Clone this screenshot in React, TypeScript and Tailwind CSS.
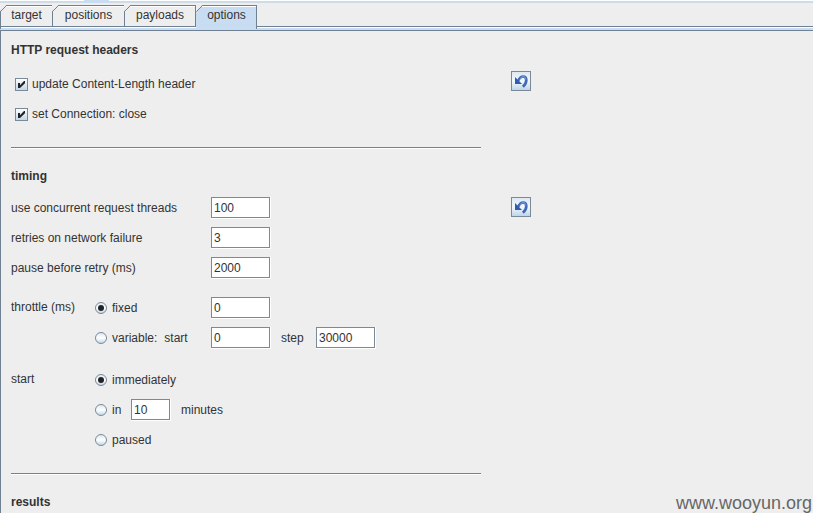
import { useState, type ReactNode } from "react";
import clsx from "clsx";

const TABS = [
  { name: "target", width: "w-[52px]" },
  { name: "positions", width: "w-[72px]" },
  { name: "payloads", width: "w-[71px]" },
  { name: "options", width: "w-[61px]" },
];

const Tab = ({
  name,
  width,
  active,
  onSelect,
}: {
  name: string;
  width: string;
  active: boolean;
  onSelect: () => void;
}) => (
  <button
    type="button"
    role="tab"
    aria-selected={active}
    onClick={onSelect}
    className={clsx(
      "relative border-t border-r border-[#6f8093] leading-4",
      width,
      active
        ? "h-6 border-l border-l-[#c8ddf2] bg-[#c8ddf2] pb-1.5 inset-shadow-[0_1px_0_#fff]"
        : "h-[22px] border-b bg-[#eee] pb-0.5 inset-shadow-[0_1px_0_#fff]"
    )}
  >
    {name}
    <svg className="absolute -top-px -left-px size-[7px]" viewBox="0 0 7 7" aria-hidden="true">
      <path d="M0 0h6.5L0 6.5z" fill="#eee" />
      <path d="M0.5 6.5l6-6" stroke="#6f8093" fill="none" />
    </svg>
  </button>
);

const ResetButton = ({ label }: { label: string }) => (
  <button
    type="button"
    aria-label={label}
    className="size-5 border border-[#7a8a99] bg-linear-to-b from-[#dde8f3] via-[#f4f8fc] to-[#bfd4e8]"
  >
    <svg className="size-[18px]" viewBox="0 0 18 18" aria-hidden="true">
      <path
        d="M6 9C7.500 6 9 4.500 11 4.500c2.300 0 3.300 1.500 3.300 3.700 0 2.600-1.200 4.600-3.400 6.600"
        fill="none"
        stroke="#4068b8"
        strokeWidth="2.700"
      />
      <path d="M8 7.500c1-2 2-3 3.200-3 1.600 0 2.600 1.200 2.600 3" fill="none" stroke="#86a6de" strokeWidth="0.900" />
      <path d="M3 5v7h7z" fill="#2f5bb0" />
    </svg>
  </button>
);

const TextBox = ({
  label,
  id,
  value,
  narrow,
}: {
  label?: string;
  id?: string;
  value: string;
  narrow?: boolean;
}) => (
  <input
    type="text"
    id={id}
    aria-label={label}
    defaultValue={value}
    className={clsx(
      "h-[22px] border-r border-b border-white bg-white px-[3px] inset-shadow-[0_0_0_1px_#7a8a99] outline-none",
      narrow ? "w-10" : "w-[60px]"
    )}
  />
);

const Check = ({ children }: { children: ReactNode }) => (
  <label className="flex h-[30px] items-center gap-1 pl-1">
    <span className="grid size-[13px]">
      <input
        type="checkbox"
        defaultChecked
        className="peer col-start-1 row-start-1 size-[13px] appearance-none border border-[#7a8a99] bg-linear-to-b from-white to-[#c3d6e8]"
      />
      <svg
        className="pointer-events-none invisible col-start-1 row-start-1 size-[13px] peer-checked:visible"
        viewBox="0 0 13 13"
        aria-hidden="true"
      >
        <path d="M3 5h2v2.300L9 3h1v2.200L5 10H3z" fill="#222" />
      </svg>
    </span>
    {children}
  </label>
);

const Radio = ({
  group,
  checked,
  children,
}: {
  group: string;
  checked?: boolean;
  children: ReactNode;
}) => (
  <label className="flex items-center gap-[5px]">
    <span className="grid size-3">
      <input
        type="radio"
        name={group}
        defaultChecked={checked}
        className="peer col-start-1 row-start-1 size-3 appearance-none rounded-full border border-[#7a8a99] bg-linear-to-b from-[#dce8f3] via-white to-[#c3d6e8]"
      />
      <span className="pointer-events-none invisible col-start-1 row-start-1 size-1.5 place-self-center rounded-full bg-[#222] peer-checked:visible" />
    </span>
    {children}
  </label>
);

const Field = ({ id, label, value }: { id: string; label: string; value: string }) => (
  <div className="flex h-[30px] items-center">
    <label htmlFor={id} className="w-[200px]">
      {label}
    </label>
    <TextBox id={id} value={value} />
  </div>
);

const Title = ({ children }: { children: ReactNode }) => (
  <h2 className="leading-5 font-bold">{children}</h2>
);

const Divider = () => (
  <hr className="mt-[18px] mb-[18px] h-px w-[470px] border-0 bg-[#6482b4] shadow-[0_1px_0_#fff]" />
);

export default function App() {
  const [tab, setTab] = useState("options");

  return (
    <div className="relative flex h-screen flex-col overflow-hidden bg-[#eee] font-['Liberation_Sans',Arial,sans-serif] text-[12px] text-[#333]">
      <div className="h-[3px] shrink-0 border-t border-t-white bg-[#cddde7]">
        <div className="-mt-px ml-[84px] h-[3px] w-[25px] bg-[#c8ddf2]" />
      </div>

      <div className="mt-0.5 flex h-[22px] shrink-0 items-start border-b border-[#6f8093]">
        <div role="tablist" className="z-10 flex items-start border-l border-[#6f8093]">
          {TABS.map(({ name, width }) => (
            <Tab
              key={name}
              name={name}
              width={width}
              active={name === tab}
              onSelect={() => setTab(name)}
            />
          ))}
        </div>
      </div>
      <div className="h-[3px] shrink-0 border-t border-white bg-[#c8ddf2]" />

      <main className="grow border-t border-l border-[#6f8093] pt-[9px] pl-[10px]">
        <section>
          <Title>HTTP request headers</Title>
          <div className="mt-[9px] flex items-start gap-[30px]">
            <div className="w-[470px]">
              <Check>update Content-Length header</Check>
              <Check>set Connection: close</Check>
            </div>
            <div className="pt-0.5">
              <ResetButton label="restore request header defaults" />
            </div>
          </div>
        </section>

        <Divider />

        <section>
          <Title>timing</Title>
          <div className="mt-[7px] flex items-start gap-[30px]">
            <div className="w-[470px]">
              <Field id="threads" label="use concurrent request threads" value="100" />
              <Field id="retries" label="retries on network failure" value="3" />
              <Field id="pause" label="pause before retry (ms)" value="2000" />

              <div className="mt-[10px] flex">
                <div className="w-[84px] leading-7">throttle (ms)</div>
                <div>
                  <div className="flex h-[30px] items-center">
                    <div className="w-[116px]">
                      <Radio group="throttle" checked>
                        fixed
                      </Radio>
                    </div>
                    <TextBox label="fixed throttle" value="0" />
                  </div>
                  <div className="flex h-[30px] items-center">
                    <div className="flex w-[116px] gap-[7px]">
                      <Radio group="throttle">variable:</Radio>
                      <label htmlFor="throttle-start">start</label>
                    </div>
                    <TextBox id="throttle-start" value="0" />
                    <label htmlFor="throttle-step" className="w-[45px] pl-[10px]">
                      step
                    </label>
                    <TextBox id="throttle-step" value="30000" />
                  </div>
                </div>
              </div>

              <div className="mt-3 flex">
                <div className="w-[84px] leading-7">start</div>
                <div>
                  <div className="flex h-[30px] items-center">
                    <Radio group="start" checked>
                      immediately
                    </Radio>
                  </div>
                  <div className="flex h-[30px] items-center">
                    <div className="w-9">
                      <Radio group="start">in</Radio>
                    </div>
                    <TextBox id="minutes" value="10" narrow />
                    <label htmlFor="minutes" className="pl-[10px]">
                      minutes
                    </label>
                  </div>
                  <div className="flex h-[30px] items-center">
                    <Radio group="start">paused</Radio>
                  </div>
                </div>
              </div>
            </div>
            <div className="pt-1">
              <ResetButton label="restore timing defaults" />
            </div>
          </div>
        </section>

        <Divider />

        <Title>results</Title>
      </main>

      <div className="absolute right-0 bottom-0 pr-px text-[18px] leading-5 text-[#666]">
        www.wooyun.org
      </div>
    </div>
  );
}
